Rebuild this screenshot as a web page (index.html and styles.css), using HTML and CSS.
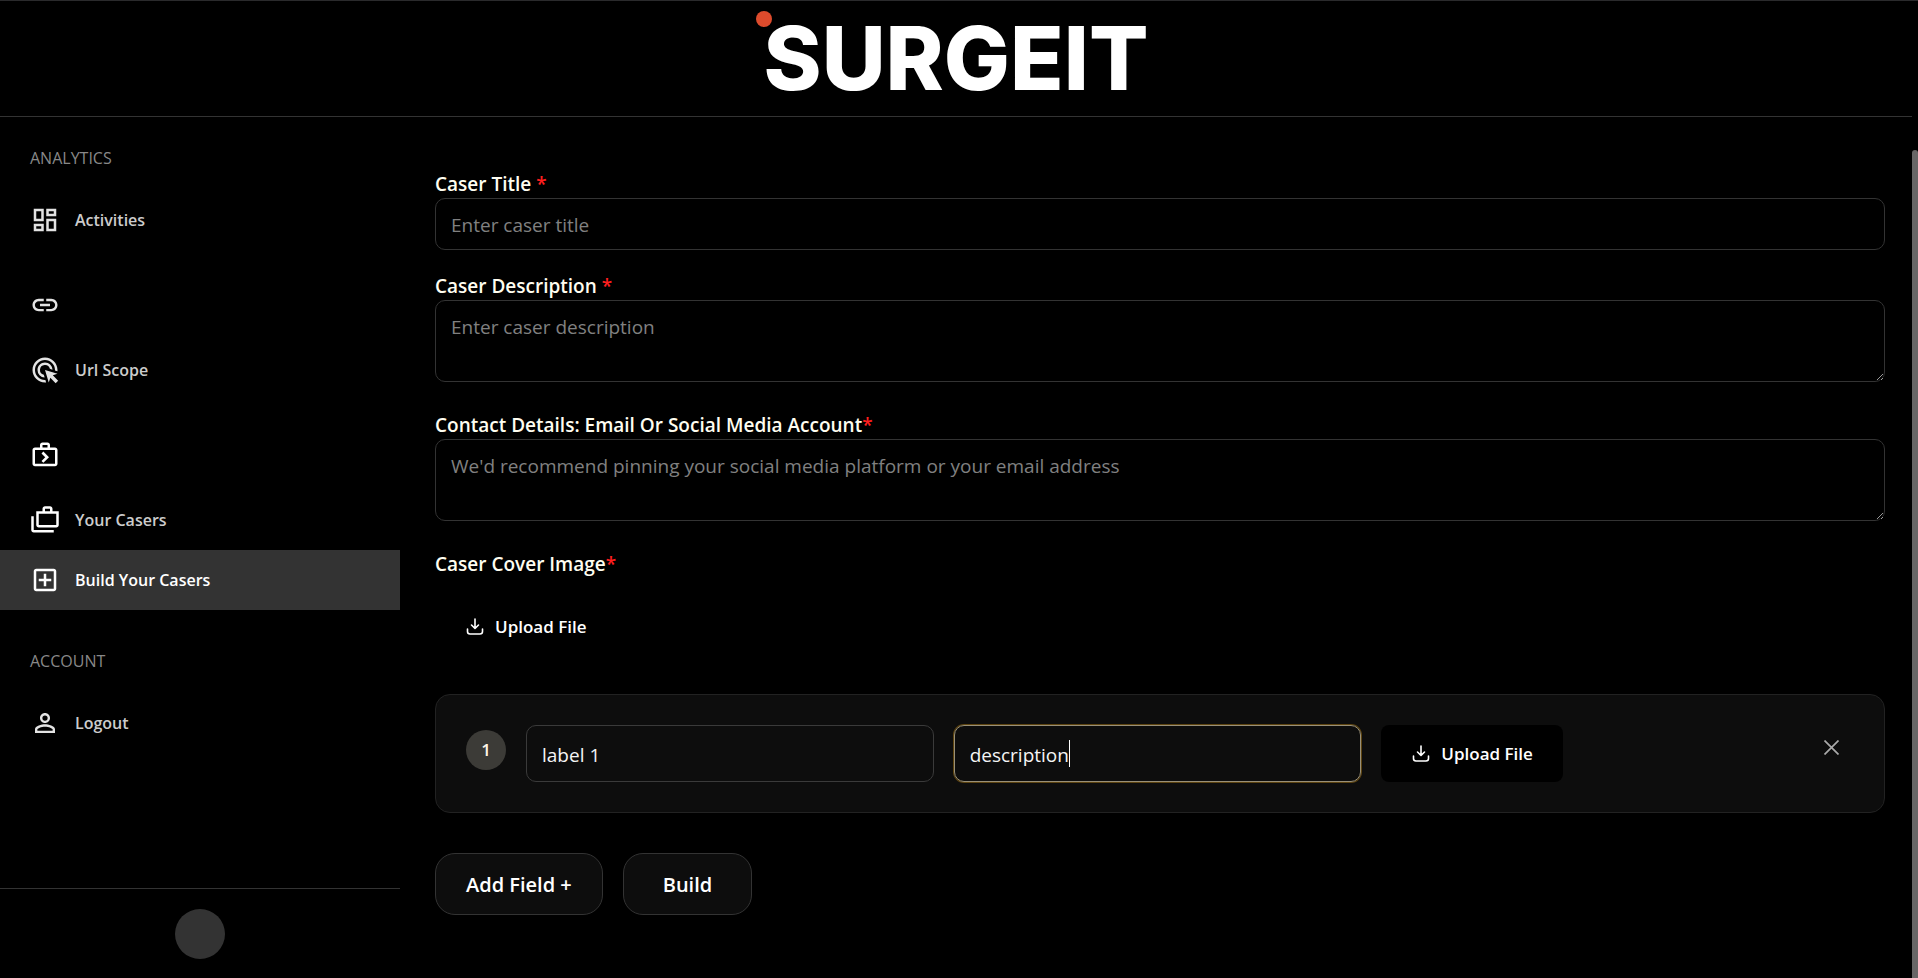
FILE: index.html
```html
<!DOCTYPE html>
<html lang="en">
<head>
<meta charset="utf-8">
<meta name="viewport" content="width=device-width, initial-scale=1">
<title>Surgeit – Build Your Casers</title>
<link rel="stylesheet" href="styles.css">
</head>
<body>
<header class="topbar">
  <a class="brand" href="#">SURGEIT<span class="brand-dot"></span></a>
</header>
<div class="layout">
  <aside class="sidebar">
    <nav class="nav">
      <h2 class="nav-heading">ANALYTICS</h2>
      <a class="nav-item" href="#">
        <svg class="icon" viewBox="0 0 24 24"><path d="M19 5v2h-4V5h4M9 5v6H5V5h4m10 8v6h-4v-6h4M9 17v2H5v-2h4M21 3h-8v6h8V3zM11 3H3v10h8V3zm10 8h-8v10h8V11zm-10 4H3v6h8v-6z"/></svg>
        <span>Activities</span>
      </a>
      <div class="nav-heading">
        <svg class="icon" viewBox="0 0 24 24"><path d="M3.9 12c0-1.71 1.39-3.1 3.1-3.1h4V7H7c-2.76 0-5 2.24-5 5s2.24 5 5 5h4v-1.9H7c-1.71 0-3.1-1.39-3.1-3.1zM8 13h8v-2H8v2zm9-6h-4v1.9h4c1.71 0 3.1 1.39 3.1 3.1s-1.39 3.1-3.1 3.1h-4V17h4c2.76 0 5-2.24 5-5s-2.24-5-5-5z"/></svg>
      </div>
      <a class="nav-item" href="#">
        <svg class="icon" viewBox="0 0 24 24"><path d="M11.71 17.99A5.993 5.993 0 0 1 6 12c0-3.31 2.69-6 6-6 3.22 0 5.84 2.53 5.99 5.71l-2.1-.63a3.999 3.999 0 1 0-4.81 4.81l.63 2.1zM22 12c0 .3-.01.6-.04.9l-1.97-.59c.01-.1.01-.21.01-.31 0-4.42-3.58-8-8-8s-8 3.58-8 8 3.58 8 8 8c.1 0 .21 0 .31-.01l.59 1.97c-.3.03-.6.04-.9.04-5.52 0-10-4.48-10-10S6.48 2 12 2s10 4.48 10 10zm-3.77 4.26L22 15l-10-3 3 10 1.26-3.77 4.27 4.27 1.98-1.98-4.28-4.26z"/></svg>
        <span>Url Scope</span>
      </a>
      <div class="nav-heading">
        <svg class="icon icon-bright" viewBox="0 0 24 24"><path d="M20 6h-4V4c0-1.1-.9-2-2-2h-4c-1.1 0-2 .9-2 2v2H4c-1.1 0-2 .9-2 2v11c0 1.1.9 2 2 2h16c1.1 0 2-.9 2-2V8c0-1.1-.9-2-2-2zM10 4h4v2h-4V4zm10 15H4V8h16v11z"/><path d="M10.700 18.200l-1.500-1.500 3-3-3-3 1.500-1.500 4.500 4.500z"/></svg>
      </div>
      <a class="nav-item" href="#">
        <svg class="icon icon-bright" viewBox="0 0 24 24"><path d="M1 9h2v11h16v2H3c-1.1 0-2-.9-2-2V9zm17-4V3c0-1.1-.9-2-2-2h-4c-1.1 0-2 .9-2 2v2H5v11c0 1.1.9 2 2 2h14c1.1 0 2-.9 2-2V5h-5zm-6-2h4v2h-4V3zm9 13H7V7h14v9z"/></svg>
        <span>Your Casers</span>
      </a>
      <a class="nav-item active" href="#" aria-current="page">
        <svg class="icon icon-bright" viewBox="0 0 24 24"><path d="M19 3H5c-1.11 0-2 .9-2 2v14c0 1.1.89 2 2 2h14c1.1 0 2-.9 2-2V5c0-1.1-.9-2-2-2zm0 16H5V5h14v14zm-8-2h2v-4h4v-2h-4V7h-2v4H7v2h4z"/></svg>
        <span>Build Your Casers</span>
      </a>
      <h2 class="nav-heading">ACCOUNT</h2>
      <a class="nav-item" href="#">
        <svg class="icon" viewBox="0 0 24 24"><path d="M12 5.9a2.1 2.1 0 1 1 0 4.2 2.1 2.1 0 0 1 0-4.2m0 9c2.97 0 6.1 1.46 6.1 2.1v1.1H5.9V17c0-.64 3.13-2.1 6.1-2.1M12 4C9.79 4 8 5.79 8 8s1.79 4 4 4 4-1.79 4-4-1.79-4-4-4zm0 9c-2.67 0-8 1.34-8 4v3h16v-3c0-2.66-5.33-4-8-4z"/></svg>
        <span>Logout</span>
      </a>
    </nav>
    <div class="profile"><div class="avatar"></div></div>
  </aside>
  <main class="content">
    <form class="form">
      <div class="field field-title">
        <label for="title">Caser Title <span class="req">*</span></label>
        <input class="control" id="title" type="text" placeholder="Enter caser title">
      </div>
      <div class="field">
        <label for="desc">Caser Description <span class="req">*</span></label>
        <textarea class="control" id="desc" placeholder="Enter caser description"></textarea>
      </div>
      <div class="field">
        <label for="contact">Contact Details: Email Or Social Media Account<span class="req">*</span></label>
        <textarea class="control" id="contact" placeholder="We'd recommend pinning your social media platform or your email address"></textarea>
      </div>
      <div class="field cover">
        <label for="cover">Caser Cover Image<span class="req">*</span></label>
        <button class="upload" id="cover" type="button">
          <svg class="upload-icon" viewBox="0 0 20 20"><path d="M10 2v9M6.500 8l3.500 3.500L13.500 8M2.500 12v2.500a2.500 2.500 0 0 0 2.500 2.500h10a2.500 2.500 0 0 0 2.500-2.500V12"/></svg>
          Upload File
        </button>
      </div>
      <section class="row">
        <span class="badge">1</span>
        <div class="row-fields">
          <input class="control" type="text" aria-label="Label" value="label 1">
          <div class="typing">
            <input class="control" id="row-desc" type="text" aria-label="Description" value="description" autofocus>
            <span class="caret"></span>
          </div>
          <button class="upload" type="button">
            <svg class="upload-icon" viewBox="0 0 20 20"><path d="M10 2v9M6.500 8l3.500 3.500L13.500 8M2.500 12v2.500a2.500 2.500 0 0 0 2.500 2.500h10a2.500 2.500 0 0 0 2.500-2.500V12"/></svg>
            Upload File
          </button>
        </div>
        <button class="close" type="button" aria-label="Remove field">
          <svg viewBox="0 0 15 15"><path d="M.5.5l14 14M14.500.5l-14 14"/></svg>
        </button>
      </section>
      <div class="actions">
        <button class="action" type="button">Add Field +</button>
        <button class="action action-build" type="submit">Build</button>
      </div>
    </form>
  </main>
</div>
<div class="scroll-thumb"></div>
</body>
</html>
```
FILE: styles.css
```css
* {
  box-sizing: border-box;
}

body {
  margin: 0;
  min-height: 100vh;
  display: flex;
  flex-direction: column;
  padding-right: 6px;
  border-top: 1px solid #2a2a2c;
  background: #000;
  color: #fff;
  font-family: "Open Sans", "Noto Sans", sans-serif;
  font-size: 19px;
}

button,
input,
textarea {
  font: inherit;
  color: inherit;
}

a {
  color: inherit;
  text-decoration: none;
}

.topbar {
  display: flex;
  justify-content: center;
  height: 116px;
  border-bottom: 1px solid #333;
}

.brand {
  position: relative;
  font-family: Inter, sans-serif;
  font-size: 88px;
  line-height: 114px;
  font-weight: 800;
}

.brand-dot {
  position: absolute;
  top: 10px;
  left: -8px;
  width: 16px;
  height: 16px;
  border-radius: 50%;
  background: #dd4b2c;
}

.layout {
  flex: 1;
  display: flex;
}

.sidebar {
  width: 400px;
  flex: none;
  display: flex;
  flex-direction: column;
}

.nav {
  flex: 1;
}

.nav-heading {
  display: flex;
  margin: 0;
  padding: 40px 30px 20px;
  color: #888;
  font-size: 16px;
  line-height: 23px;
  font-weight: 400;
}

.nav-heading:first-child {
  padding-top: 30px;
}

.nav-item {
  display: flex;
  align-items: center;
  gap: 15px;
  height: 60px;
  padding: 0 30px;
  color: #ccc;
  font-size: 16px;
  font-weight: 600;
}

.nav-item.active {
  background: #333;
  color: #fff;
}

.icon {
  width: 30px;
  height: 30px;
  fill: #e3e3e3;
}

.icon-bright {
  fill: #fff;
}

.profile {
  display: flex;
  justify-content: center;
  height: 90px;
  padding-top: 20px;
  border-top: 1px solid #333;
}

.avatar {
  width: 50px;
  height: 50px;
  border-radius: 50%;
  background: #333;
}

.content {
  flex: 1;
  padding: 54px 27px 0 35px;
}

.field {
  display: flex;
  flex-direction: column;
  margin-bottom: 30px;
}

.field-title {
  margin-bottom: 23px;
}

.field label {
  line-height: 27px;
  font-size: 19px;
  font-weight: 600;
  color: #fffdf0;
}

.req {
  color: #ff1f1f;
}

.control {
  width: 100%;
  height: 52px;
  padding: 13px 15px 11px;
  border: 1px solid #333;
  border-radius: 10px;
  background: transparent;
  color: #f5f5f5;
  line-height: 27px;
  outline: none;
}

.control::placeholder {
  color: #808080;
}

textarea.control {
  display: block;
  height: 82px;
}

.cover {
  gap: 20px;
  align-items: flex-start;
  margin-bottom: 39px;
}

.upload {
  display: flex;
  align-items: center;
  justify-self: start;
  gap: 10px;
  height: 57px;
  padding: 0 30px;
  border: 0;
  border-radius: 8px;
  background: #000;
  font-size: 17px;
  font-weight: 600;
}

.upload-icon {
  width: 20px;
  height: 20px;
  fill: none;
  stroke: #fff;
  stroke-width: 1.6;
  stroke-linecap: round;
  stroke-linejoin: round;
}

.row {
  display: flex;
  align-items: flex-start;
  gap: 20px;
  padding: 30px;
  border: 1px solid #222;
  border-radius: 15px;
  background: #0d0d0d;
}

.badge {
  flex: none;
  width: 40px;
  margin-top: 5px;
  border-radius: 50%;
  background: #3c3b37;
  color: #fff6e6;
  font-size: 17px;
  line-height: 40px;
  font-weight: 600;
  text-align: center;
}

.row-fields {
  flex: 1;
  display: grid;
  grid-template-columns: repeat(3, 1fr);
  gap: 20px;
}

.row-fields .control {
  height: 57px;
  border-color: #3a3a3a;
}

.typing {
  position: relative;
}

.typing .control {
  display: block;
  caret-color: transparent;
}

.row-fields .control:focus {
  border-color: #999078;
  box-shadow: 0 0 0 1px #5c4310;
}

.caret {
  position: absolute;
  top: 15px;
  left: 115px;
  width: 1px;
  height: 27px;
  background: #fff;
}

.close {
  flex: none;
  display: grid;
  place-items: center;
  width: 45px;
  height: 45px;
  padding: 0;
  border: 0;
  background: none;
}

.close svg {
  width: 15px;
  height: 15px;
  fill: none;
  stroke: #aaa;
  stroke-width: 1.7;
}

.actions {
  display: flex;
  gap: 20px;
  margin-top: 40px;
}

.action {
  height: 62px;
  padding: 0 30px;
  border: 1px solid #333;
  border-radius: 20px;
  background: #0d0d0d;
  font-size: 20px;
  font-weight: 600;
}

.action-build {
  padding: 0 39px;
}

.scroll-thumb {
  position: fixed;
  top: 150px;
  right: 0;
  bottom: 0;
  width: 6px;
  border-radius: 4px 4px 0 0;
  background: #686666;
}
```
